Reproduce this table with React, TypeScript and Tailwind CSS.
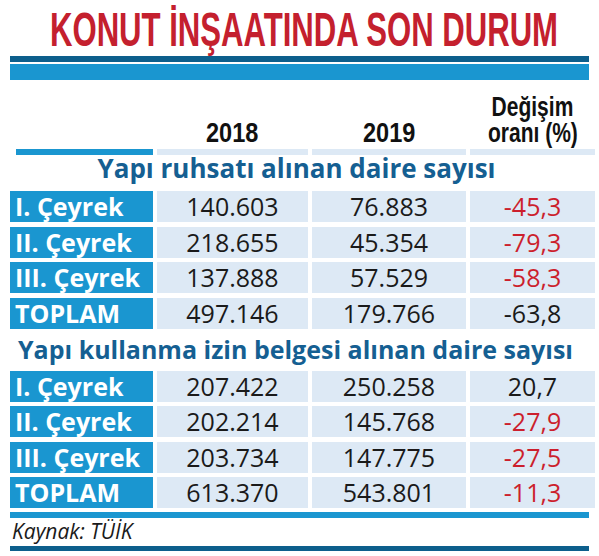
import React from 'react';

type Row = { label: string; a: string; b: string; c: string; red: boolean };

const ruhsat: Row[] = [
  { label: 'I. Çeyrek', a: '140.603', b: '76.883', c: '-45,3', red: true },
  { label: 'II. Çeyrek', a: '218.655', b: '45.354', c: '-79,3', red: true },
  { label: 'III. Çeyrek', a: '137.888', b: '57.529', c: '-58,3', red: true },
  { label: 'TOPLAM', a: '497.146', b: '179.766', c: '-63,8', red: false },
];

const iskan: Row[] = [
  { label: 'I. Çeyrek', a: '207.422', b: '250.258', c: '20,7', red: false },
  { label: 'II. Çeyrek', a: '202.214', b: '145.768', c: '-27,9', red: true },
  { label: 'III. Çeyrek', a: '203.734', b: '147.775', c: '-27,5', red: true },
  { label: 'TOPLAM', a: '613.370', b: '543.801', c: '-11,3', red: true },
];

// no condensed face installed, so squeeze Liberation Sans horizontally
const cond = "font-['Liberation_Sans',Arial,sans-serif]";

// label | 2018 | 2019 | change
const cols = 'grid grid-cols-[143px_151px_154px_125px] gap-x-[4px]';

const DataRows = ({ rows }: { rows: Row[] }) => (
  <div className="flex flex-col gap-y-[4.5px]">
    {rows.map((r) => (
      <div key={r.label} className={`${cols} h-[31px] text-[25px] leading-none`}>
        <div className="flex items-center bg-[#1a96d0] pl-[5px] font-bold text-white">
          {r.label}
        </div>
        <div className="flex items-center justify-center bg-[#dde9f5] text-[#1a1a1a]">{r.a}</div>
        <div className="flex items-center justify-center bg-[#dde9f5] text-[#1a1a1a]">{r.b}</div>
        <div
          className={`flex items-center justify-center bg-[#dde9f5] ${
            r.red ? 'text-[#cc1f2d]' : 'text-[#1a1a1a]'
          }`}
        >
          {r.c}
        </div>
      </div>
    ))}
  </div>
);

export default function App() {
  return (
    <div className="h-[556px] w-[599px] overflow-hidden bg-white font-['Open_Sans',sans-serif]">
      <div className={`h-[56px] pl-[50px] pt-[6px] text-[48px] leading-none text-[#c4202e] ${cond}`}>
        <span className="inline-block origin-left scale-x-[0.648] whitespace-nowrap font-bold">
          KONUT İNŞAATINDA SON DURUM
        </span>
      </div>

      <div className="mx-[10px]">
        <div className="h-[6px] bg-[#0d5f8c]" />
        <div className="h-[2px] bg-white" />
        <div className="h-[16px] bg-[#1a96d0]" />

        {/* column headers */}
        <div
          className={`${cols} mt-[14px] items-end text-[28px] font-bold leading-[26px] text-[#111] ${cond}`}
        >
          <div />
          <div className="text-center">
            <span className="inline-block scale-x-[0.84]">2018</span>
          </div>
          <div className="text-center">
            <span className="inline-block scale-x-[0.84]">2019</span>
          </div>
          <div className="flex flex-col items-center whitespace-nowrap">
            <span className="inline-block scale-x-[0.75]">Değişim</span>
            <span className="inline-block scale-x-[0.75]">oranı (%)</span>
          </div>
        </div>
        <div className={`${cols} mt-[3px] h-[6px]`}>
          <div className="ml-[6px] bg-[#1a96d0]" />
          <div className="bg-[#dde9f5]" />
          <div className="bg-[#dde9f5]" />
          <div className="bg-[#dde9f5]" />
        </div>

        <div className="h-[36px] pr-[6px] text-center text-[26px] font-bold leading-[26px] text-[#155f92]">
          Yapı ruhsatı alınan daire sayısı
        </div>
        <DataRows rows={ruhsat} />

        <div className="h-[42px] whitespace-nowrap pl-[8px] pt-[7px] text-[25px] font-bold leading-[26px] text-[#155f92]">
          Yapı kullanma izin belgesi alınan daire sayısı
        </div>
        <DataRows rows={iskan} />

        <div className="mt-[3.5px] h-[6px] bg-[#1a96d0]" />
        <div className="h-[28px] pl-[2px] pt-[3px] text-[21px] italic leading-[20px] text-[#1a1a1a]">
          Kaynak: TÜİK
        </div>
        <div className="h-[5px] bg-[#0d5f8c]" />
      </div>
    </div>
  );
}
